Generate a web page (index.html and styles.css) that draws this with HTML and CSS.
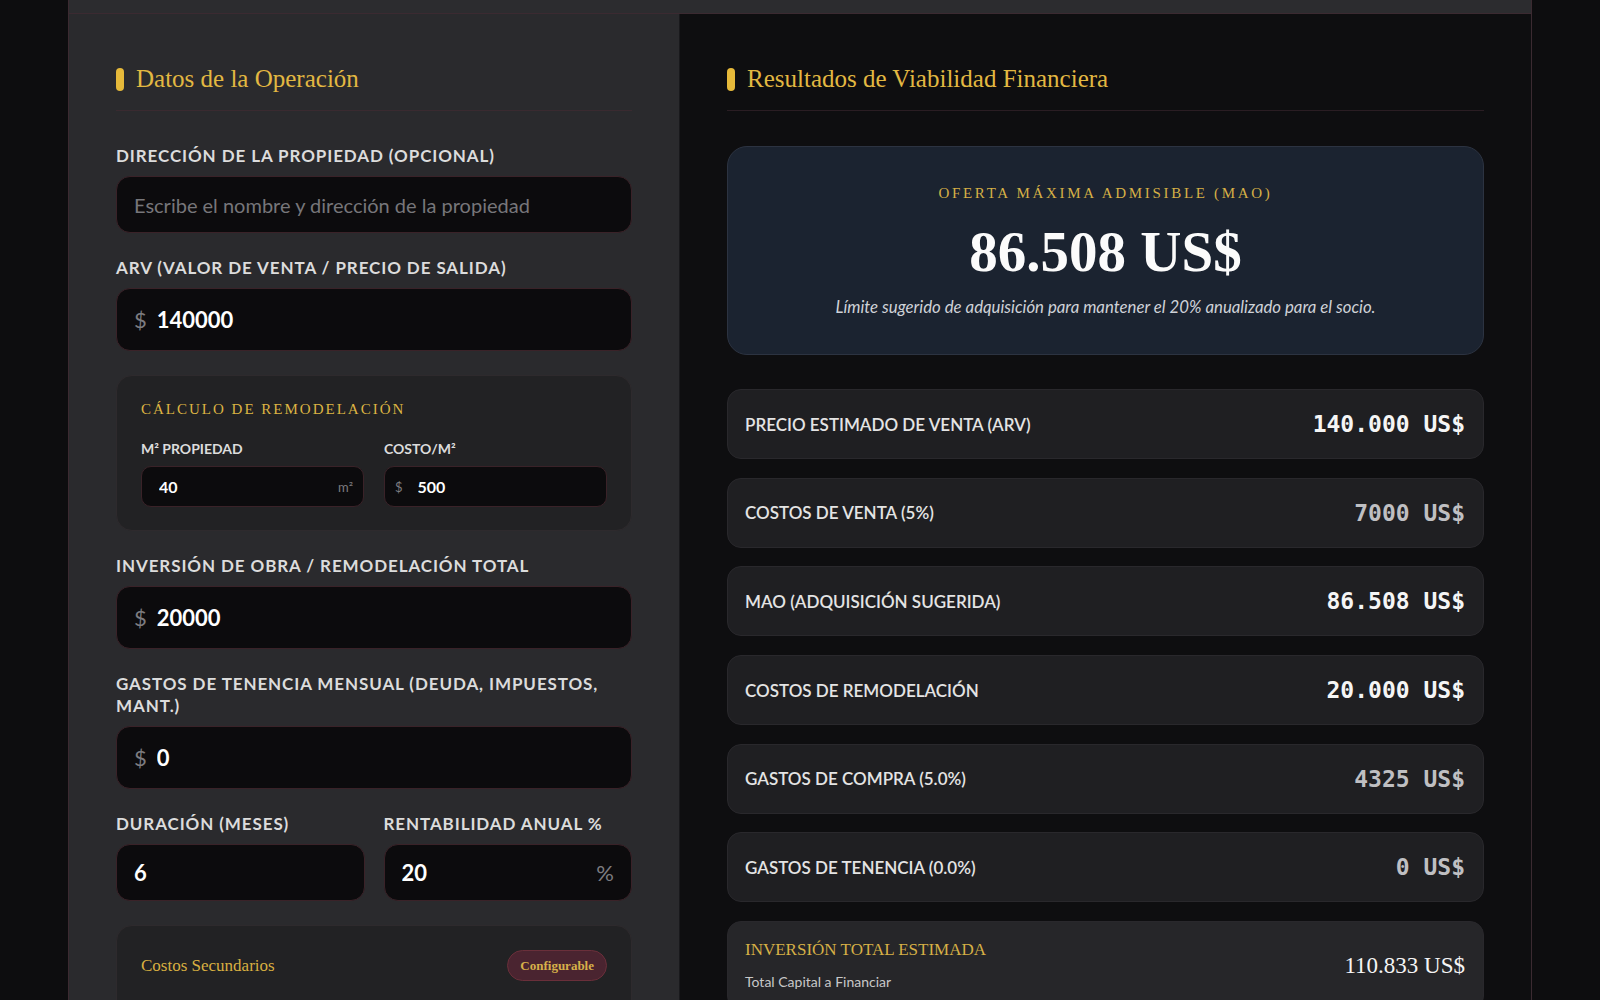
FILE: index.html
```html
<!DOCTYPE html>
<html lang="es">
<head>
  <meta charset="UTF-8">
  <title>Calculadora MAO – Viabilidad Financiera</title>
  <link rel="stylesheet" href="styles.css">
</head>
<body>

  <div class="app">
    <div class="topbar"></div>

    <main class="layout">
      <!-- Columna izquierda: entradas -->
      <section class="col col-inputs">
        <h2 class="panel-title">Datos de la Operación</h2>

        <div class="field">
          <label for="address">Dirección de la propiedad (opcional)</label>
          <div class="input-box">
            <input type="text" id="address" placeholder="Escribe el nombre y dirección de la propiedad">
          </div>
        </div>

        <div class="field">
          <label for="arv">ARV (Valor de venta / Precio de salida)</label>
          <div class="input-box big">
            <span class="prefix">$</span>
            <input type="text" id="arv" value="140000">
          </div>
        </div>

        <div class="sub-card field">
          <h3 class="sub-title">Cálculo de Remodelación</h3>
          <div class="two-col small-gap">
            <div>
              <label class="mini" for="m2">M² Propiedad</label>
              <div class="input-box mini-box">
                <input type="text" id="m2" value="40">
                <span class="suffix small">m²</span>
              </div>
            </div>
            <div>
              <label class="mini" for="costm2">Costo/M²</label>
              <div class="input-box mini-box">
                <span class="prefix small">$</span>
                <input type="text" id="costm2" value="500">
              </div>
            </div>
          </div>
        </div>

        <div class="field">
          <label for="reno">Inversión de obra / Remodelación total</label>
          <div class="input-box big">
            <span class="prefix">$</span>
            <input type="text" id="reno" value="20000">
          </div>
        </div>

        <div class="field">
          <label for="holding">Gastos de tenencia mensual (Deuda, Impuestos, Mant.)</label>
          <div class="input-box big">
            <span class="prefix">$</span>
            <input type="text" id="holding" value="0">
          </div>
        </div>

        <div class="field two-col">
          <div>
            <label for="months">Duración (meses)</label>
            <div class="input-box">
              <input type="text" id="months" value="6">
            </div>
          </div>
          <div>
            <label for="rate">Rentabilidad anual %</label>
            <div class="input-box">
              <input type="text" id="rate" value="20">
              <span class="suffix">%</span>
            </div>
          </div>
        </div>

        <div class="sub-card secondary">
          <div class="secondary-head">
            <h3 class="secondary-title">Costos Secundarios</h3>
            <span class="pill">Configurable</span>
          </div>
        </div>
      </section>

      <!-- Columna derecha: resultados -->
      <section class="col col-results">
        <h2 class="panel-title">Resultados de Viabilidad Financiera</h2>

        <div class="mao-card">
          <div class="mao-label">Oferta Máxima Admisible (MAO)</div>
          <div class="mao-value">86.508 US$</div>
          <div class="mao-note">Límite sugerido de adquisición para mantener el 20% anualizado para el socio.</div>
        </div>

        <div class="results">
          <div class="row"><span class="row-label">Precio estimado de venta (ARV)</span><span class="row-value">140.000 US$</span></div>
          <div class="row"><span class="row-label">Costos de venta (5%)</span><span class="row-value dim">7000 US$</span></div>
          <div class="row"><span class="row-label">MAO (Adquisición sugerida)</span><span class="row-value">86.508 US$</span></div>
          <div class="row"><span class="row-label">Costos de remodelación</span><span class="row-value">20.000 US$</span></div>
          <div class="row"><span class="row-label">Gastos de compra (5.0%)</span><span class="row-value dim">4325 US$</span></div>
          <div class="row"><span class="row-label">Gastos de tenencia (0.0%)</span><span class="row-value dim">0 US$</span></div>
          <div class="row total">
            <div>
              <div class="total-label">Inversión total estimada</div>
              <div class="total-sub">Total Capital a Financiar</div>
            </div>
            <span class="total-value">110.833 US$</span>
          </div>
        </div>
      </section>
    </main>
  </div>

</body>
</html>
```

FILE: styles.css
```css
html, body { margin:0; padding:0; }
body { background:#0d0d0f; font-family: Lato, "Noto Sans", sans-serif; color:#e6e6e6; }

.app { width:1464px; margin:0 auto; border-left:1px solid #3b2a31; border-right:1px solid #3b2a31; box-sizing:border-box; }
.topbar { height:13px; background:#2c2c2f; border-bottom:1px solid #3b2a31; }

.layout { display:grid; grid-template-columns:610px 1fr; }
.col { padding:48px 47px 40px; box-sizing:border-box; }
.col-inputs { background:#2a2a2d; }
.col-results { background:#0e0e10; border-left:1px solid #19191c; }

/* titulos de panel */
.panel-title { display:flex; align-items:center; gap:12px; margin:0 0 34px; padding-bottom:14px; border-bottom:1px solid #3a2a30; font-family:"Liberation Serif", serif; font-weight:normal; font-size:25px; line-height:34px; color:#e2b842; }
.panel-title::before { content:""; width:8px; height:23px; border-radius:4px; background:#e6b93a; }
.col-results .panel-title { border-bottom-color:#2a1d23; margin-bottom:35px; }

/* campos */
.field { margin-bottom:24px; }
label { display:block; margin-bottom:9px; font-size:17px; font-weight:700; line-height:22px; letter-spacing:.9px; text-transform:uppercase; color:#dcdcdc; }
.input-box { display:flex; align-items:center; gap:10px; height:57px; padding:0 17px; box-sizing:border-box; background:#0c0b0d; border:1px solid #3a2228; border-radius:14px; }
.input-box.big { height:63px; }
.input-box input { flex:1; width:100%; min-width:0; padding:0; border:none; outline:none; background:transparent; font-family:inherit; font-size:22px; font-weight:700; color:#fff; }
#address { font-size:20px; font-weight:400; }
#address::placeholder { color:#77767a; }
.prefix, .suffix { font-size:22px; color:#7d7c80; }
.prefix.small, .suffix.small { font-size:13px; }

.two-col { display:grid; grid-template-columns:1fr 1fr; gap:19px; }
.two-col > div { min-width:0; }
.two-col.small-gap { gap:20px; }

/* tarjetas internas */
.sub-card { padding:24px 24px 23px; background:#222224; border:1px solid #2e2a2d; border-radius:16px; }
.sub-title { margin:0 0 23px; font-family:"Liberation Serif", serif; font-weight:normal; font-size:15px; line-height:18px; letter-spacing:2px; text-transform:uppercase; color:#ddb443; }
label.mini { margin-bottom:9px; font-size:14px; line-height:16px; letter-spacing:0; }
.input-box.mini-box { height:41px; border-radius:10px; padding:0 10px 0 17px; }
.input-box.mini-box input { font-size:16px; }
.mini-box .prefix.small { margin-left:-7px; margin-right:5px; }

.secondary { min-height:120px; }
.secondary-head { display:flex; justify-content:space-between; align-items:center; }
.secondary-title { margin:0; font-family:"Liberation Serif", serif; font-weight:normal; font-size:17px; color:#d9b041; }
.pill { padding:0 12px; height:31px; line-height:29px; box-sizing:border-box; border-radius:16px; background:#4a2430; border:1px solid #6a2f3a; font-family:"Liberation Serif", serif; font-weight:700; font-size:13px; color:#d6b04a; }

/* resultados */
.mao-card { padding:36px 20px 37px; margin-bottom:34px; text-align:center; background:#1b2330; border:1px solid #2c3341; border-radius:20px; }
.mao-label { margin-bottom:18px; font-family:"Liberation Serif", serif; font-size:15px; line-height:20px; letter-spacing:2.7px; text-transform:uppercase; color:#d6b046; }
.mao-value { font-family:"Liberation Serif", serif; font-weight:700; font-size:57px; line-height:62px; color:#fbfbfb; }
.mao-note { margin-top:14px; font-style:italic; font-size:16.8px; line-height:20px; color:#cfd2d8; }

.results { display:flex; flex-direction:column; gap:18.7px; }
.row { display:flex; justify-content:space-between; align-items:center; height:70px; padding:0 18px 0 17px; box-sizing:border-box; background:#1f1f22; border:1px solid #29282c; border-radius:14px; }
.row-label { font-size:17px; font-weight:600; text-transform:uppercase; color:#e4e4e4; }
.row-value { font-family:"DejaVu Sans Mono", "Liberation Mono", monospace; font-weight:700; font-size:23px; color:#f5f5f5; }
.row-value.dim { color:#bfbfc2; }

.row.total { height:auto; padding:19px 18px 18px 17px; background:#262629; }
.total-label { margin-bottom:14px; font-family:"Liberation Serif", serif; font-size:17px; line-height:18px; text-transform:uppercase; color:#d6b046; }
.total-sub { font-size:14px; line-height:18px; color:#c8c8c8; }
.total-value { font-family:"Liberation Serif", serif; font-size:23px; color:#f5f5f5; }
```
